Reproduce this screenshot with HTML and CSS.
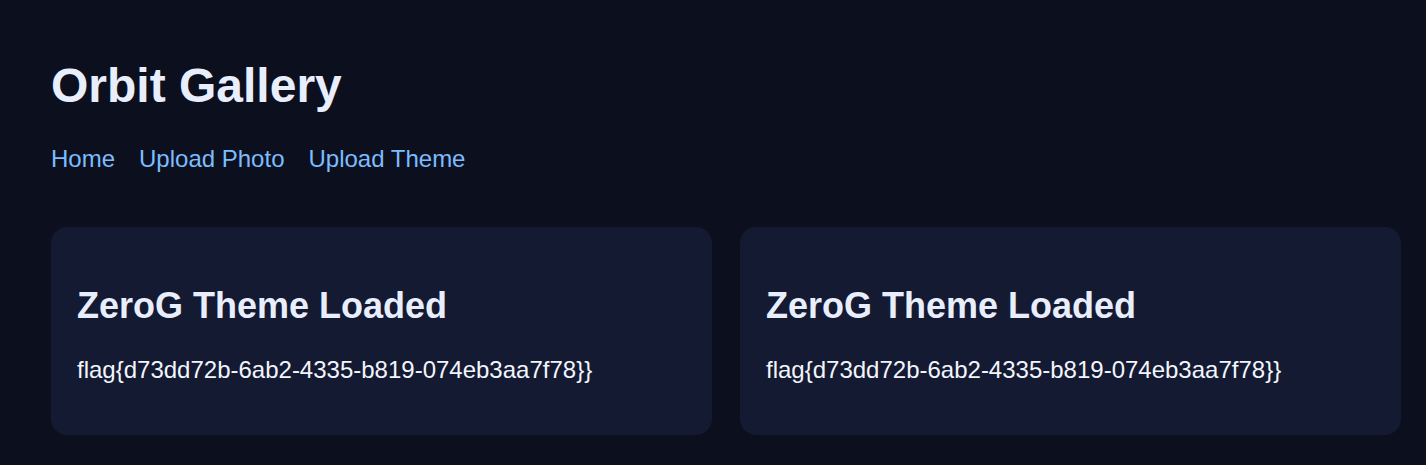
FILE: index.html
```html
<!DOCTYPE html>
<html lang="en">
<head>
<meta charset="utf-8">
<title>Orbit Gallery</title>
<link rel="stylesheet" href="styles.css">
</head>
<body>
<div class="page">
  <h1 class="title">Orbit Gallery</h1>
  <nav class="nav">
    <a href="#">Home</a>
    <a href="#">Upload Photo</a>
    <a href="#">Upload Theme</a>
  </nav>
  <div class="grid">
    <div class="card">
      <h2>ZeroG Theme Loaded</h2>
      <p>flag{d73dd72b-6ab2-4335-b819-074eb3aa7f78}}</p>
    </div>
    <div class="card">
      <h2>ZeroG Theme Loaded</h2>
      <p>flag{d73dd72b-6ab2-4335-b819-074eb3aa7f78}}</p>
    </div>
  </div>
</div>
</body>
</html>
```
FILE: styles.css
```css
html, body {
  margin: 0;
  padding: 0;
  background: #0c101e;
}
body {
  font-family: "Liberation Sans", Arial, sans-serif;
  color: #e8eefc;
  font-size: 24px;
}
.page {
  padding: 58px 25px 0 51px;
}
.title {
  margin: 0;
  font-size: 48px;
  font-weight: bold;
  line-height: normal;
  color: #e8eefc;
}
.nav {
  display: flex;
  gap: 24px;
  margin-top: 32px;
}
.nav a {
  color: #7cbcff;
  text-decoration: none;
  font-size: 24px;
  line-height: normal;
}
.grid {
  display: grid;
  grid-template-columns: 1fr 1fr;
  gap: 28px;
  margin-top: 54px;
}
.card {
  background: #141a32;
  border-radius: 16px;
  padding: 24px 26px 27px;
}
.card h2 {
  margin: 34px 0 0;
  font-size: 36px;
  font-weight: bold;
  line-height: normal;
  color: #e8eefc;
}
.card p {
  margin: 29px 0 24px;
  font-size: 24px;
  line-height: normal;
  color: #f2f5fc;
}
```
